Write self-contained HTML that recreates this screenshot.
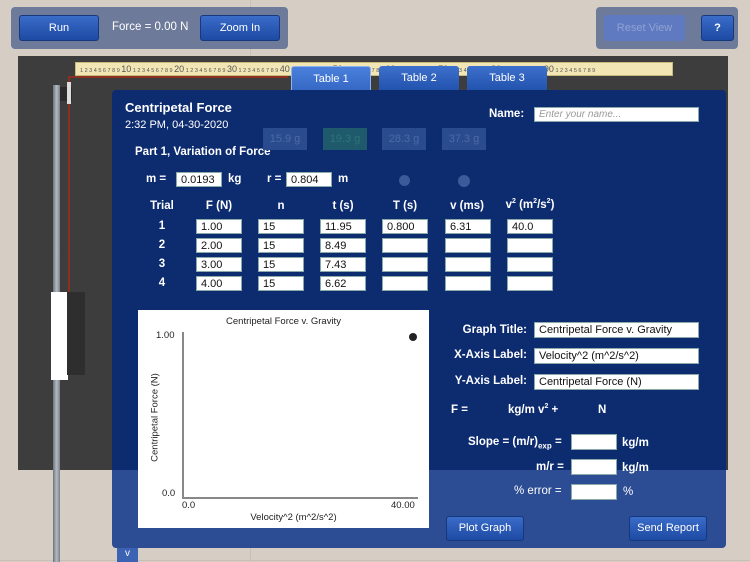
<!DOCTYPE html>
<html><head><meta charset="utf-8"><style>
*{margin:0;padding:0;box-sizing:border-box}
body{width:750px;height:562px;overflow:hidden;position:relative;background:#d6cec4;font-family:"Liberation Sans",sans-serif;color:#fff}
.a{position:absolute}
.btn{position:absolute;background:linear-gradient(#3a6cc9,#1d4aa3);border:1px solid #16387c;border-radius:3px;color:#fff;font-size:11px;text-align:center}
.in{position:absolute;background:#fff;color:#111;font-size:11px;padding-left:4px;border:1px solid #8aa;height:15px;line-height:14px}
.lbl{position:absolute;font-size:11.5px;font-weight:bold;color:#fff}
.hd{position:absolute;font-size:11.5px;font-weight:bold;text-align:center;width:50px}
.chip{position:absolute;width:44px;height:22px;background:#2a4b8e;color:#4d6aa8;font-size:11px;text-align:center;line-height:22px}
.tab{position:absolute;top:66px;width:80px;height:25px;background:linear-gradient(#3d70cc,#2152ad);border-radius:3px 3px 0 0;font-size:11px;text-align:center;line-height:25px}
</style></head><body>
<div class="a" style="left:250px;top:0;width:1px;height:562px;background:#c8c0b5"></div>
<div class="a" style="left:0;top:560px;width:750px;height:1px;background:#c8c0b5"></div>
<!-- board -->
<div class="a" style="left:18px;top:56px;width:710px;height:414px;background:#3d3d3d"></div>
<!-- ruler -->
<div class="a" style="left:75px;top:62px;width:598px;height:14px;background:#f2e6b4;border:1px solid #c9b97a;font-size:5.5px;color:#555;line-height:12px;white-space:nowrap;overflow:hidden;padding-left:4px">1 2 3 4 5 6 7 8 9 <b style="font-size:9px;font-weight:normal">10</b> 1 2 3 4 5 6 7 8 9 <b style="font-size:9px;font-weight:normal">20</b> 1 2 3 4 5 6 7 8 9 <b style="font-size:9px;font-weight:normal">30</b> 1 2 3 4 5 6 7 8 9 <b style="font-size:9px;font-weight:normal">40</b> 1 2 3 4 5 6 7 8 9 <b style="font-size:9px;font-weight:normal">50</b> 1 2 3 4 5 6 7 8 9 <b style="font-size:9px;font-weight:normal">60</b> 1 2 3 4 5 6 7 8 9 <b style="font-size:9px;font-weight:normal">70</b> 1 2 3 4 5 6 7 8 9 <b style="font-size:9px;font-weight:normal">80</b> 1 2 3 4 5 6 7 8 9 <b style="font-size:9px;font-weight:normal">90</b> 1 2 3 4 5 6 7 8 9</div>
<!-- string -->
<div class="a" style="left:68px;top:76px;width:220px;height:2px;background:#8a3020"></div>
<div class="a" style="left:68px;top:76px;width:2px;height:216px;background:#8a3020"></div>
<!-- pole -->
<div class="a" style="left:53px;top:85px;width:7px;height:477px;background:linear-gradient(90deg,#6d737b,#b4bac2,#7b818a)"></div>
<div class="a" style="left:60px;top:87px;width:12px;height:14px;background:#2b2b2b"></div>
<div class="a" style="left:67px;top:82px;width:4px;height:22px;background:#ddd"></div>
<div class="a" style="left:51px;top:292px;width:17px;height:88px;background:#fff"></div>
<div class="a" style="left:67px;top:292px;width:18px;height:83px;background:#2e2e2e"></div>
<!-- toolbars -->
<div class="a" style="left:11px;top:7px;width:277px;height:42px;background:#6d7a99;border-radius:4px"></div>
<div class="btn" style="left:19px;top:15px;width:80px;height:26px;line-height:24px">Run</div>
<div class="a" style="left:112px;top:21px;font-size:11.5px">Force = 0.00 N</div>
<div class="btn" style="left:200px;top:15px;width:80px;height:26px;line-height:24px">Zoom In</div>
<div class="a" style="left:596px;top:7px;width:142px;height:42px;background:#6d7a99;border-radius:4px"></div>
<div class="a" style="left:604px;top:15px;width:81px;height:26px;line-height:26px;background:#5f7ac0;border-radius:3px;color:#8fa3d4;font-size:11px;text-align:center">Reset View</div>
<div class="btn" style="left:701px;top:15px;width:33px;height:26px;line-height:24px;font-weight:bold">?</div>
<!-- tabs -->
<div class="tab" style="left:291px;background:linear-gradient(#4a80dc,#3468c4);border:1px solid #8db4ee;border-bottom:none">Table 1</div>
<div class="tab" style="left:379px">Table 2</div>
<div class="tab" style="left:467px">Table 3</div>
<!-- panel -->
<div class="a" style="left:112px;top:90px;width:614px;height:380px;background:#0d2c70;border-radius:4px 4px 0 0"></div>
<div class="a" style="left:112px;top:470px;width:614px;height:78px;background:#2c4c93;border-radius:0 0 4px 4px"></div>
<div class="a" style="left:117px;top:548px;width:21px;height:14px;background:#3c62b3;font-size:10px;text-align:center">v</div>
<div class="a" style="left:125px;top:100px;font-size:13px;font-weight:bold">Centripetal Force</div>
<div class="a" style="left:125px;top:119px;font-size:11px">2:32 PM, 04-30-2020</div>
<div class="a" style="left:135px;top:146px;font-size:11.5px;font-weight:bold">Part 1, Variation of Force</div>
<div class="lbl" style="left:489px;top:108px">Name:</div>
<div class="in" style="left:534px;top:107px;width:165px;color:#999;font-style:italic;font-size:10px">Enter your name...</div>
<div class="chip" style="left:263px;top:128px">15.9 g</div>
<div class="chip" style="left:323px;top:128px;background:#1e5a6c;color:#2f7378">19.3 g</div>
<div class="chip" style="left:382px;top:128px">28.3 g</div>
<div class="chip" style="left:442px;top:128px">37.3 g</div>
<div class="lbl" style="left:146px;top:173px">m =</div>
<div class="in" style="left:176px;top:172px;width:46px">0.0193</div>
<div class="lbl" style="left:228px;top:173px">kg</div>
<div class="lbl" style="left:267px;top:173px">r =</div>
<div class="in" style="left:286px;top:172px;width:46px">0.804</div>
<div class="lbl" style="left:338px;top:173px">m</div>
<div class="a" style="left:399px;top:175px;width:11px;height:11px;border-radius:50%;background:#3a5a9a"></div>
<div class="a" style="left:458px;top:175px;width:12px;height:12px;border-radius:50%;background:#3a5a9a"></div>
<div class="hd" style="left:137px;top:200px">Trial</div>
<div class="hd" style="left:194px;top:200px">F (N)</div>
<div class="hd" style="left:256px;top:200px">n</div>
<div class="hd" style="left:318px;top:200px">t (s)</div>
<div class="hd" style="left:380px;top:200px">T (s)</div>
<div class="hd" style="left:442px;top:200px">v (ms)</div>
<div class="hd" style="left:498px;top:198px;width:64px">v<sup style="font-size:7px">2</sup> (m<sup style="font-size:7px">2</sup>/s<sup style="font-size:7px">2</sup>)</div>
<div class="hd" style="left:137px;top:220px">1</div><div class="hd" style="left:137px;top:239px">2</div><div class="hd" style="left:137px;top:258px">3</div><div class="hd" style="left:137px;top:277px">4</div>
<div class="in" style="left:196px;top:219px;width:46px">1.00</div><div class="in" style="left:258px;top:219px;width:46px">15</div><div class="in" style="left:320px;top:219px;width:46px">11.95</div><div class="in" style="left:382px;top:219px;width:46px">0.800</div><div class="in" style="left:445px;top:219px;width:46px">6.31</div><div class="in" style="left:507px;top:219px;width:46px">40.0</div>
<div class="in" style="left:196px;top:238px;width:46px">2.00</div><div class="in" style="left:258px;top:238px;width:46px">15</div><div class="in" style="left:320px;top:238px;width:46px">8.49</div><div class="in" style="left:382px;top:238px;width:46px"></div><div class="in" style="left:445px;top:238px;width:46px"></div><div class="in" style="left:507px;top:238px;width:46px"></div>
<div class="in" style="left:196px;top:257px;width:46px">3.00</div><div class="in" style="left:258px;top:257px;width:46px">15</div><div class="in" style="left:320px;top:257px;width:46px">7.43</div><div class="in" style="left:382px;top:257px;width:46px"></div><div class="in" style="left:445px;top:257px;width:46px"></div><div class="in" style="left:507px;top:257px;width:46px"></div>
<div class="in" style="left:196px;top:276px;width:46px">4.00</div><div class="in" style="left:258px;top:276px;width:46px">15</div><div class="in" style="left:320px;top:276px;width:46px">6.62</div><div class="in" style="left:382px;top:276px;width:46px"></div><div class="in" style="left:445px;top:276px;width:46px"></div><div class="in" style="left:507px;top:276px;width:46px"></div>
<!-- graph -->
<div class="a" style="left:138px;top:310px;width:291px;height:218px;background:#fff;color:#222">
<div class="a" style="left:0;top:6px;width:291px;text-align:center;font-size:9.5px">Centripetal Force v. Gravity</div>
<div class="a" style="left:18px;top:20px;font-size:9.5px">1.00</div>
<div class="a" style="left:24px;top:178px;font-size:9.5px">0.0</div>
<div class="a" style="left:44px;top:22px;width:2px;height:166px;background:#888"></div>
<div class="a" style="left:44px;top:187px;width:236px;height:2px;background:#888"></div>
<div class="a" style="left:271px;top:23px;width:8px;height:8px;border-radius:50%;background:#222"></div>
<div class="a" style="left:44px;top:190px;font-size:9.5px">0.0</div>
<div class="a" style="left:253px;top:190px;font-size:9.5px">40.00</div>
<div class="a" style="left:0;top:202px;width:291px;text-align:center;font-size:9.5px;padding-left:20px">Velocity^2 (m^2/s^2)</div>
<div class="a" style="left:-38px;top:102px;width:110px;text-align:center;font-size:9.5px;transform:rotate(-90deg)">Centripetal Force (N)</div>
</div>
<!-- right -->
<div class="lbl" style="left:427px;top:324px;width:100px;text-align:right">Graph Title:</div>
<div class="in" style="left:534px;top:322px;width:165px;height:16px">Centripetal Force v. Gravity</div>
<div class="lbl" style="left:427px;top:349px;width:100px;text-align:right">X-Axis Label:</div>
<div class="in" style="left:534px;top:348px;width:165px;height:16px">Velocity^2 (m^2/s^2)</div>
<div class="lbl" style="left:427px;top:375px;width:100px;text-align:right">Y-Axis Label:</div>
<div class="in" style="left:534px;top:374px;width:165px;height:16px">Centripetal Force (N)</div>
<div class="lbl" style="left:451px;top:404px">F =</div>
<div class="lbl" style="left:508px;top:403px">kg/m v<sup style="font-size:7px">2</sup> +</div>
<div class="lbl" style="left:598px;top:404px">N</div>
<div class="lbl" style="left:468px;top:436px">Slope = (m/r)<sub style="font-size:8px">exp</sub> =</div>
<div class="in" style="left:571px;top:434px;width:46px;height:16px"></div>
<div class="lbl" style="left:622px;top:437px">kg/m</div>
<div class="lbl" style="left:536px;top:461px">m/r =</div>
<div class="in" style="left:571px;top:459px;width:46px;height:16px"></div>
<div class="lbl" style="left:622px;top:462px">kg/m</div>
<div class="lbl" style="left:514px;top:485px;font-weight:normal">% error =</div>
<div class="in" style="left:571px;top:484px;width:46px;height:16px"></div>
<div class="lbl" style="left:623px;top:486px;font-weight:normal">%</div>
<div class="btn" style="left:446px;top:516px;width:78px;height:25px;line-height:23px">Plot Graph</div>
<div class="btn" style="left:629px;top:516px;width:78px;height:25px;line-height:23px">Send Report</div>
</body></html>
